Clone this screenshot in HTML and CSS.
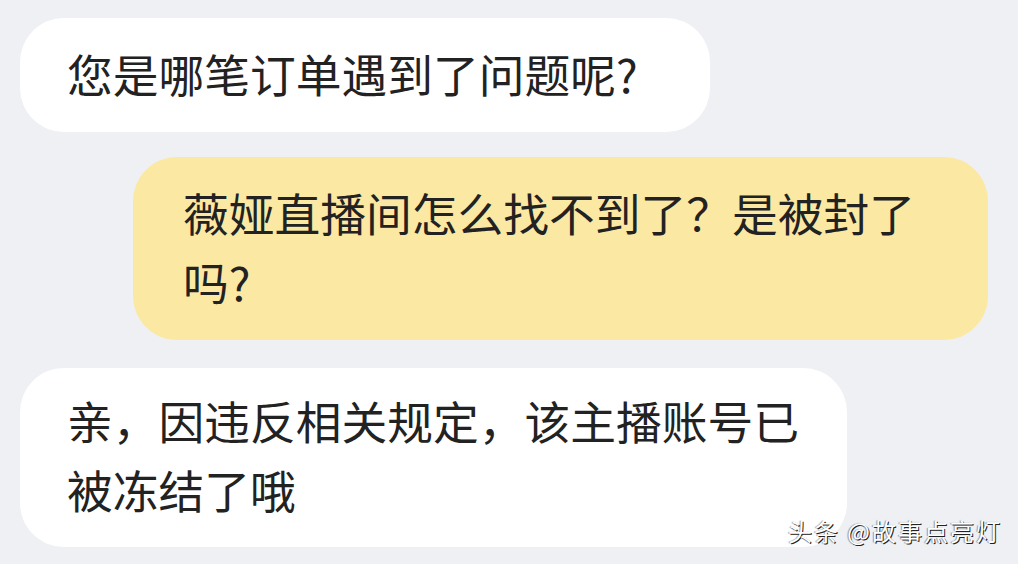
FILE: index.html
```html
<!DOCTYPE html>
<html lang="zh-CN">
<head>
    <meta charset="UTF-8">
    <meta name="viewport" content="width=device-width, initial-scale=1.0">
    <title>客服对话</title>
    <link rel="stylesheet" href="styles.css">
</head>
<body>
    <!-- Chat thread -->
    <div class="chat">
        <div class="bubble bubble-in bubble-short">您是哪笔订单遇到了问题呢?</div>
        <div class="bubble bubble-out">薇娅直播间怎么找不到了？是被封了吗?</div>
        <div class="bubble bubble-in bubble-long">亲，因违反相关规定，该主播账号已被冻结了哦</div>
    </div>

    <div class="watermark">头条 @故事点亮灯</div>
</body>
</html>
```

FILE: styles.css
```css
html, body {
    height: 100%;
}
body {
    margin: 0;
    background-color: #eef0f4;
    font-family: "Noto Sans CJK SC", "Noto Sans", sans-serif;
    color: #222;
    overflow: hidden;
    position: relative;
}
.chat {
    display: flex;
    flex-direction: column;
    padding: 18px 30px 0 20px;
    gap: 25px;
}
.bubble {
    box-sizing: border-box;
    font-size: 45.75px;
    line-height: 69px;
    padding: 21px 47px 24px 47px;
    border-radius: 44px;
    background-color: #fff;
}
.bubble-in {
    align-self: flex-start;
}
.bubble-short {
    padding-right: 72px;
}
.bubble-long {
    width: 827px;
    margin-top: 3px;
    padding-top: 18px;
    padding-bottom: 23px;
}
.bubble-out {
    align-self: flex-end;
    width: 855px;
    padding-left: 50px;
    background-color: #fbe8a3;
}
.watermark {
    position: absolute;
    right: 16px;
    bottom: 16px;
    font-size: 24px;
    letter-spacing: 2px;
    color: #fff;
    text-shadow: 1px 1px 0 #222, -1px 0 1px rgba(0, 0, 0, 0.4);
}
```
